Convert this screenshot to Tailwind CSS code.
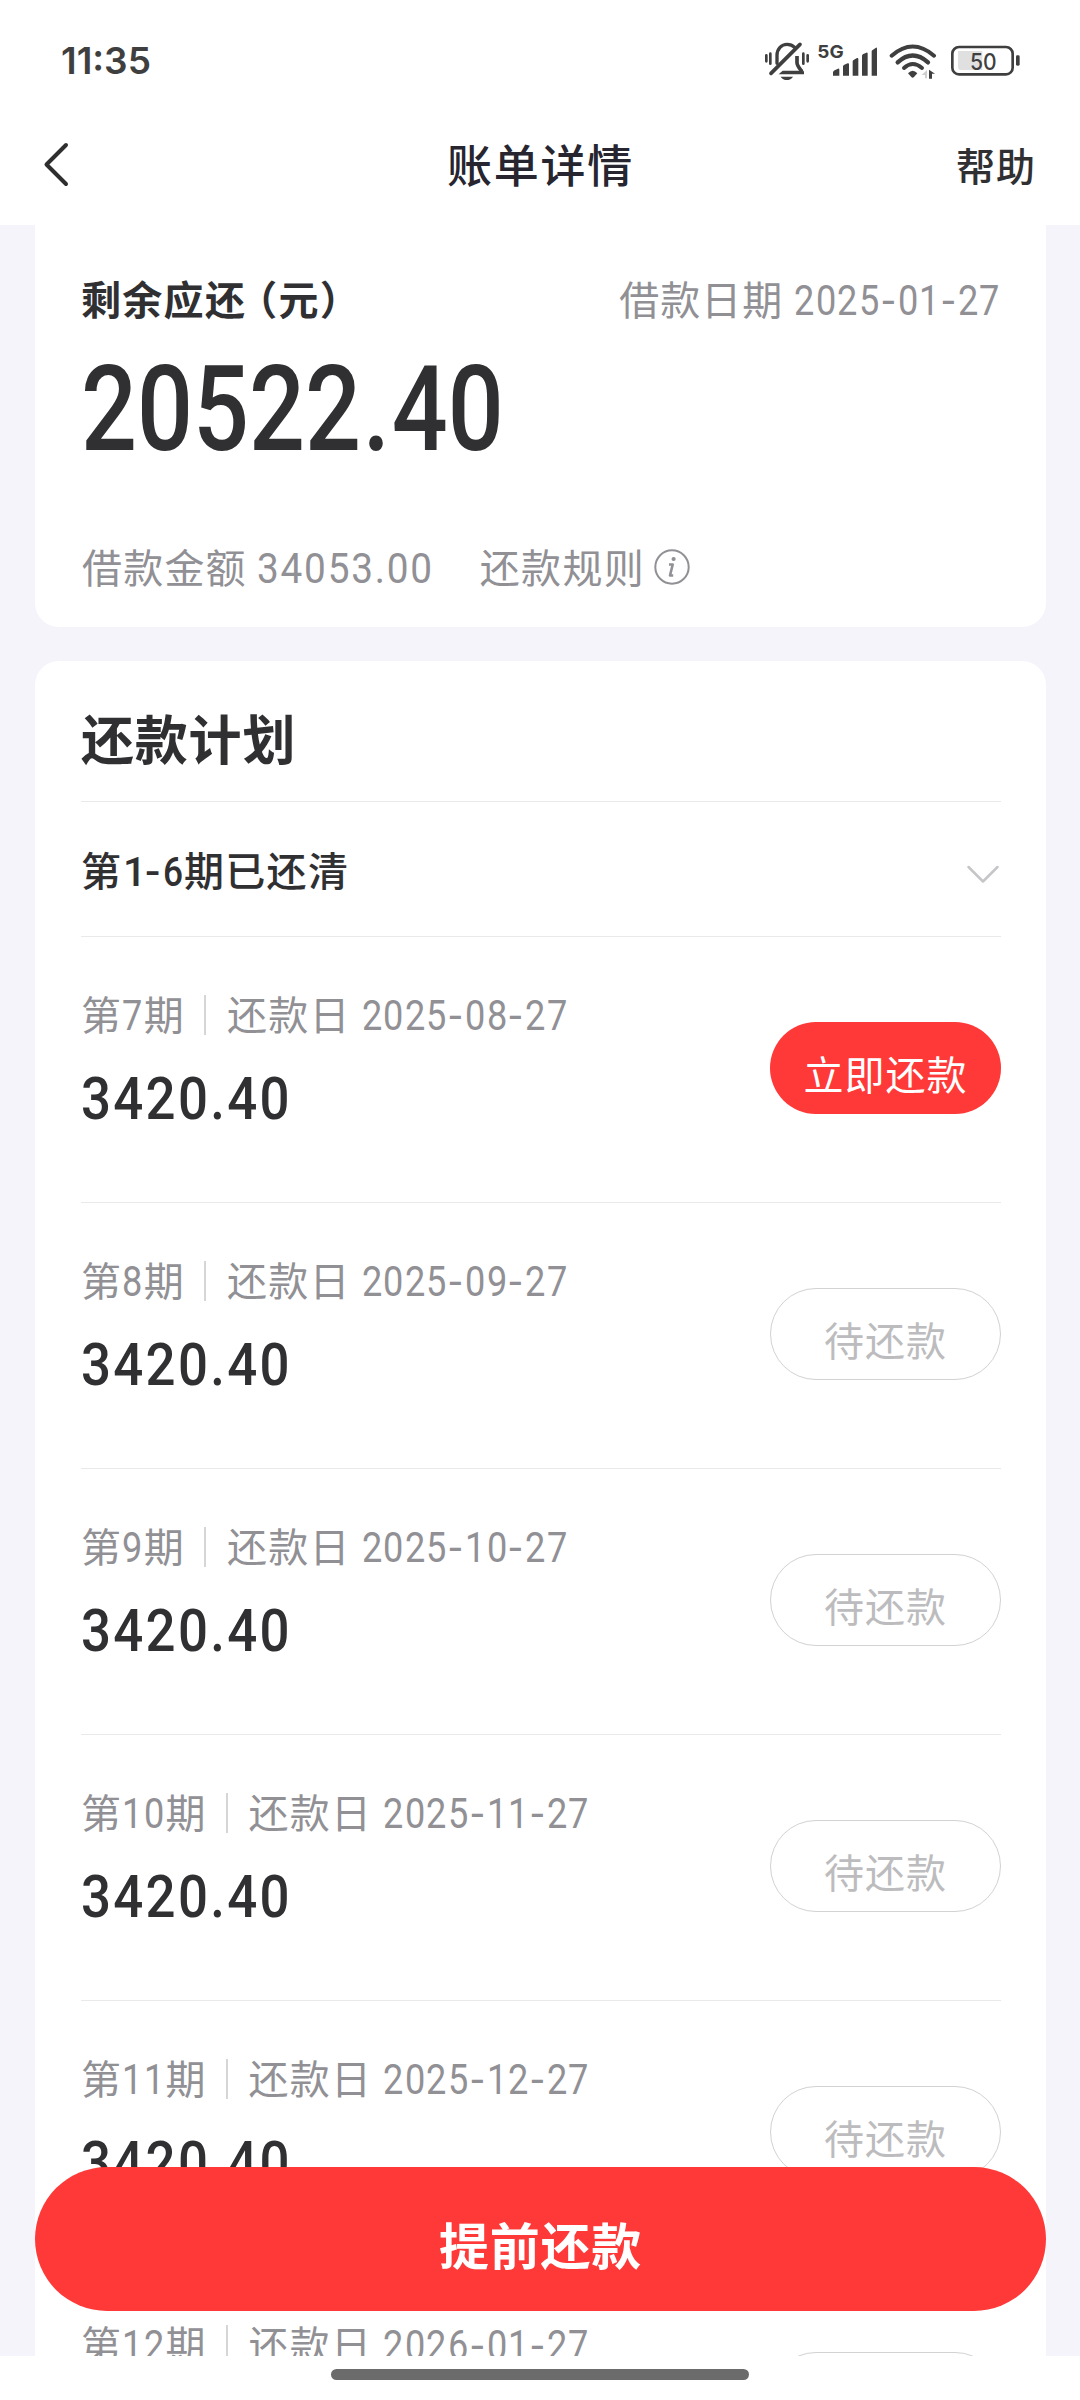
<!DOCTYPE html>
<html lang="zh-CN">
<head>
<meta charset="utf-8">
<title>账单详情</title>
<script src="https://cdn.jsdelivr.net/npm/@tailwindcss/browser@4"></script>
</head>
<body class="bg-white">
<div class="relative flex h-[2400px] w-[1080px] flex-col overflow-hidden bg-white font-['Noto_Sans_CJK_SC',sans-serif] text-[#303033]">

  <!-- status bar -->
  <div class="flex h-[120px] shrink-0 items-center justify-between pl-[61px] pr-[54px] pt-[2px] text-[#3f3f3f]">
    <span class="font-['Inter',sans-serif] text-[37px] leading-[44px] font-semibold">11:35</span>
    <div class="flex h-[44px] items-center">
      <svg class="h-[44px] w-[50px]" viewBox="66 55 150 132" fill="none" stroke="#3f3f3f" stroke-width="9" stroke-linecap="round">
        <path d="M79 104v18M91 99v30M190 99v30M203 104v18" stroke-width="8"/>
        <path d="M111 128V104C111 84 125 71 141 71c9 0 17 3 23 9" stroke-width="10"/>
        <path d="M93 158L180 71" stroke-width="11"/>
        <path d="M171 106v20c0 8 5 14 15 27" stroke-width="11" stroke-linecap="butt"/>
        <path d="M116 161L128 150H180L192 152V161Z" fill="#3f3f3f" stroke="none"/>
        <path d="M122 168h37c-4 7-11 10-18.500 10s-14.500-3-18.500-10z" fill="#3f3f3f" stroke="none"/>
      </svg>
      <svg class="h-[44px] w-[66px]" viewBox="216 55 198 132" fill="#3f3f3f">
        <text x="232" y="111" font-family="Inter, sans-serif" font-weight="700" font-size="54" textLength="79" lengthAdjust="spacingAndGlyphs">5G</text>
        <path d="M279 165v-10q1-4 5-6l10-5q4-1 4 3v18zM309 165v-28q0-3 4-5l10-4q4-1 4 3v34zM338 165v-43q0-3 4-5l9-5q4-1 4 3v50zM366 165v-60q0-3 4-5l9-4q4-1 4 3v66zM395 165v-73q0-3 4-5l9-6q3-1 3 3v81z"/>
      </svg>
      <svg class="h-[44px] w-[70px]" viewBox="414 55 210 132" fill="none" stroke="#3f3f3f" stroke-width="12" stroke-linecap="round">
        <path d="M455 105Q518 50 582 105"/>
        <path d="M473 125Q518 84 564 125" stroke-width="13"/>
        <path d="M492 142Q518 118 546 142"/>
        <path d="M504 158Q518 143 532 158L522 169Q518 173 514 169Z" fill="#3f3f3f" stroke="none"/>
        <path d="M561 148v25h-6v-10h-10z" fill="#cfcfcf" stroke="none"/>
        <path d="M567 174v-27l18 12h-9v15z" fill="#3f3f3f" stroke="none"/>
      </svg>
      <svg class="h-[44px] w-[78px]" viewBox="624 55 234 132">
        <path d="M654 91h73v57h-63q-10 0-10-10z" fill="#e0e0e0"/>
        <rect x="637" y="79" width="181" height="82" rx="20" fill="none" stroke="#3f3f3f" stroke-width="8"/>
        <rect x="828" y="104" width="11" height="31" rx="4" fill="#3f3f3f"/>
        <text x="690" y="147" font-family="Inter, sans-serif" font-weight="500" font-size="68" fill="#3f3f3f" textLength="80" lengthAdjust="spacingAndGlyphs">50</text>
      </svg>
    </div>
  </div>

  <!-- title bar -->
  <div class="grid h-[105px] shrink-0 grid-cols-3 items-start pl-[42px] pr-[44px]">
    <svg class="mt-[20px] h-[50px] w-[30px]" viewBox="0 0 30 50" fill="none" stroke="#2e2e2e" stroke-width="4" stroke-linecap="round" stroke-linejoin="round"><path d="M24 5L4.500 24.500L24 44"/></svg>
    <h1 class="mt-[8px] ml-[3px] text-center text-[45px] leading-[72px] font-medium tracking-[1.8px] text-[#262530]">账单详情</h1>
    <span class="mt-[8px] text-right text-[39px] leading-[72px] font-medium tracking-[1px]">帮助</span>
  </div>

  <!-- scrolling content -->
  <div class="flex h-[2131px] shrink-0 flex-col gap-[34px] overflow-hidden bg-[#f4f4fa] pr-[34px] pl-[35px]">
    <section class="h-[402px] shrink-0 rounded-b-[24px] bg-white pr-[45px] pl-[46px] pt-[43px]">
      <div class="flex h-[62px] items-baseline justify-between">
        <span class="flex text-[40px] leading-[60px] font-bold tracking-[1.3px]">剩余应还<span class="-ml-[9px]">（</span>元<span>）</span></span>
        <div class="flex items-baseline text-[#919095]">
          <span class="text-[40px] leading-[60px] tracking-[1px]">借款日期</span>
          <span id="loan-date" class="ml-[11px]"></span>
        </div>
      </div>
      <div class="mt-[10px] origin-left scale-x-[0.835] font-['Roboto',sans-serif] text-[118px] leading-[140px] font-medium">20522<span class="mx-[2px]">.</span>40</div>
      <div class="mt-[56px] flex h-[62px] items-baseline text-[#919095]">
        <span class="ml-[1px] text-[40px] leading-[60px] tracking-[1.2px]">借款金额</span>
        <span class="ml-[10px] inline-block w-[172px]"><span class="inline-block origin-left scale-x-[0.9] whitespace-nowrap font-['Roboto',sans-serif] text-[43px] leading-[60px] tracking-[2px]">34053.00</span></span>
        <span class="ml-[51px] text-[40px] leading-[60px] tracking-[1.3px]">还款规则</span>
        <svg class="ml-[9px] h-[36px] w-[36px] self-center" viewBox="0 0 36 36" fill="none" stroke="#919095"><circle cx="18" cy="18" r="16.700" stroke-width="2"/><circle cx="19.600" cy="10" r="2.100" fill="#919095" stroke="none"/><path d="M15 15.500h3.700L16 26.500h3.200" stroke-width="2.600" stroke-linejoin="round"/></svg>
      </div>
    </section>

    <section class="h-[1800px] shrink-0 rounded-t-[24px] bg-white pr-[45px] pl-[46px]">
      <h2 class="h-[141px] border-b border-[#e9e9eb] pt-[36px] text-[53px] leading-[80px] font-bold tracking-[0.8px]">还款计划</h2>
      <div class="flex h-[135px] items-start justify-between border-b border-[#e9e9eb] pt-[37px]">
        <div class="flex h-[60px] items-baseline font-medium">
          <span class="w-[42px] text-[40px] leading-[60px]">第</span>
          <span class="flex w-[61px] items-baseline font-['Roboto',sans-serif] text-[41px] leading-[60px]"><span class="w-[22px]">1</span><span class="w-[18px] origin-left scale-x-[1.1]">-</span><span class="w-[20px] origin-left scale-x-[0.86]">6</span></span>
          <span class="text-[40px] leading-[60px] tracking-[1.3px]">期已还清</span>
        </div>
        <svg class="mt-[22px] mr-[1px] h-[30px] w-[34px]" viewBox="0 0 34 30" fill="none" stroke="#c6c6c8" stroke-width="2.500" stroke-linecap="round" stroke-linejoin="round"><path d="M2.500 6L17 20.500L31.500 6"/></svg>
      </div>
      <div id="plan"></div>
    </section>
  </div>

  <!-- floating action -->
  <button class="absolute top-[2167px] left-[35px] flex h-[144px] w-[1011px] items-center justify-center rounded-full bg-[#ff3838] pt-[7px] text-[50px] leading-[72px] font-bold tracking-[0.8px] text-white">提前还款</button>

  <!-- gesture bar -->
  <div class="flex h-[44px] shrink-0 justify-center bg-white pt-[13px]"><div class="h-[11px] w-[418px] rounded-full bg-[#6b6b6b]"></div></div>
</div>

<script>
const digits = s => [...s].map(c => c === '-'
  ? '<span class="inline-block w-[17px] pl-[1px]"><span class="inline-block origin-left scale-x-[1.1]">-</span></span>'
  : '<span class="inline-block w-[21.6px]"><span class="inline-block origin-left scale-x-[0.86]">' + c + '</span></span>').join('');
const num = s => '<span class="inline-flex items-baseline font-[\'Roboto\',sans-serif] text-[42px] leading-[56px] font-normal">' + digits(s) + '</span>';
document.getElementById('loan-date').innerHTML = num('2025-01-27');
const rows = [['7','2025-08-27'],['8','2025-09-27'],['9','2025-10-27'],['10','2025-11-27'],['11','2025-12-27'],['12','2026-01-27']];
document.getElementById('plan').innerHTML = rows.map(([n, d], i) => `
<div class="flex h-[266px] items-start justify-between border-b border-[#e9e9eb]">
  <div class="pt-[48px]">
    <div class="flex h-[56px] items-baseline text-[40px] leading-[56px] tracking-[1.2px] text-[#919095]">
      <span>第</span>${num(n)}<span>期</span>
      <span class="mt-[10px] ml-[19px] h-[40px] w-[2px] self-start bg-[#d6d6d9]"></span>
      <span class="ml-[21px]">还款日</span><span class="ml-[11px]">${num(d)}</span>
    </div>
    <div class="mt-[22px] origin-left scale-x-[0.88] font-['Roboto',sans-serif] text-[60px] leading-[72px] font-medium tracking-[2.6px]">3420.40</div>
  </div>
  ${i === 0
    ? '<button class="mt-[85px] flex h-[92px] w-[231px] items-center justify-center rounded-full bg-[#ff3838] pt-[10px] text-[40px] leading-[60px] tracking-[1px] text-white">立即还款</button>'
    : '<button class="mt-[85px] flex h-[92px] w-[231px] items-center justify-center rounded-full border border-[#d2d2d4] pt-[10px] text-[40px] leading-[60px] tracking-[1px] text-[#bcbcbe]">待还款</button>'}
</div>`).join('');
</script>
</body>
</html>
